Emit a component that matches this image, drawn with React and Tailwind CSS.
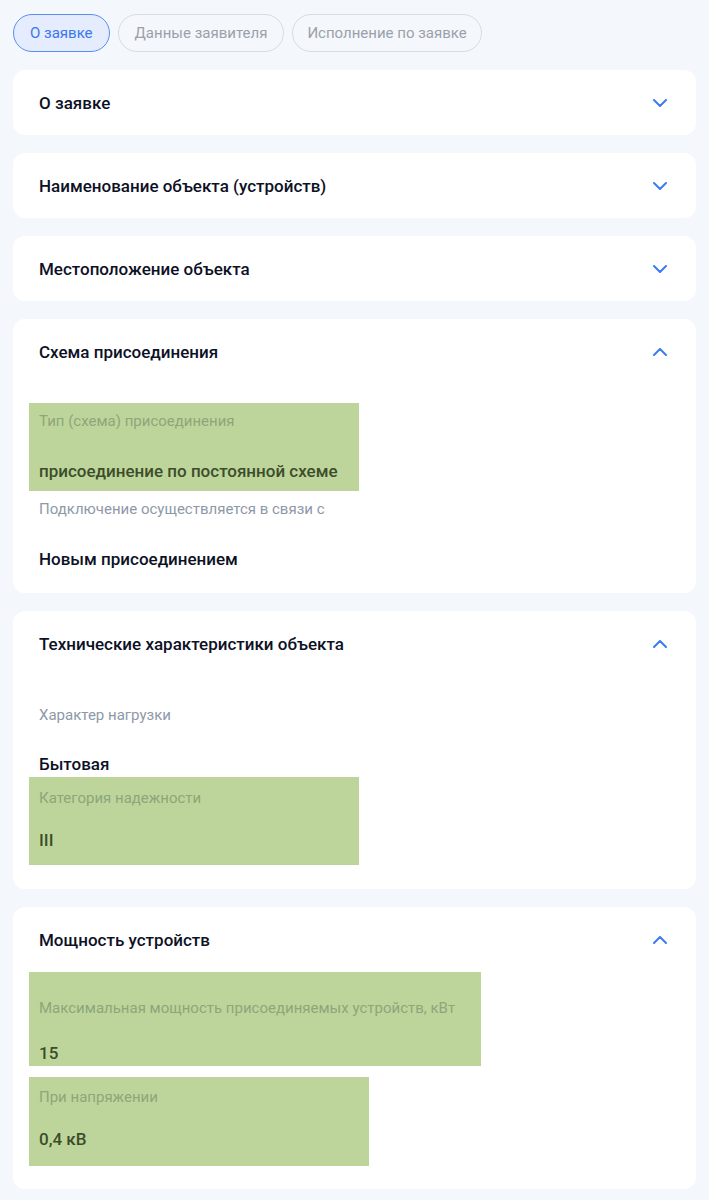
import React from 'react';

const font = { fontFamily: 'Roboto, "Noto Sans", sans-serif' };

function Chevron({ open }) {
  return (
    <svg width="14" height="8" viewBox="0 0 14 8" fill="none" className="shrink-0">
      <path
        d={open ? 'M1 7l6-6 6 6' : 'M1 1l6 6 6-6'}
        stroke="#3b7cf2"
        strokeWidth="2"
        strokeLinecap="round"
        strokeLinejoin="round"
      />
    </svg>
  );
}

function Card({ title, open, bodyClass, children }) {
  return (
    <div className="bg-white rounded-xl">
      <div className="h-[65px] flex items-center justify-between pl-[26px] pr-[29px]">
        <span className="text-[17px] font-medium text-[#0d1126] pt-[3px]">{title}</span>
        <Chevron open={open} />
      </div>
      {open && <div className={bodyClass}>{children}</div>}
    </div>
  );
}

// plain field, no highlight
function Field({ label, value, className, gap }) {
  return (
    <div className={`px-[10px] whitespace-nowrap ${className}`}>
      <div className="text-[15px] leading-5 text-[#8e99a8]">{label}</div>
      <div className={`${gap} text-[17px] leading-6 font-medium text-[#0d1126]`}>{value}</div>
    </div>
  );
}

// highlighted field (green marker)
function Marked({ label, value, className, gap }) {
  return (
    <div className={`px-[10px] whitespace-nowrap bg-[#bdd59a] ${className}`}>
      <div className="text-[15px] leading-5 text-[#8ea67a]">{label}</div>
      <div className={`${gap} text-[17px] leading-6 font-medium text-[#3c4d2b]`}>{value}</div>
    </div>
  );
}

export default function App() {
  return (
    <div className="min-h-screen bg-[#f4f7fc] px-[13px] pt-[14px] pb-4" style={font}>
      {/* Tabs */}
      <div className="flex gap-[8px]">
        <button className="h-[38px] px-[16px] rounded-full border border-[#5b8ef2] bg-[#e4ecfd] text-[15px] text-[#3b77ef]">
          О заявке
        </button>
        <button className="h-[38px] px-[16px] rounded-full border border-[#d9dde3] text-[15px] text-[#9ba1aa]">
          Данные заявителя
        </button>
        <button className="h-[38px] px-[14px] rounded-full border border-[#d9dde3] text-[15px] text-[#9ba1aa]">
          Исполнение по заявке
        </button>
      </div>

      <div className="mt-[18px] flex flex-col gap-[18px]">
        <Card title="О заявке" />
        <Card title="Наименование объекта (устройств)" />
        <Card title="Местоположение объекта" />

        <Card title="Схема присоединения" open bodyClass="pl-4 pt-[19px] pb-[14px]">
          <Marked
            className="w-[330px] pt-2 pb-2"
            gap="mt-[28px]"
            label="Тип (схема) присоединения"
            value="присоединение по постоянной схеме"
          />
          <Field
            className="pt-2 pb-2"
            gap="mt-[28px]"
            label="Подключение осуществляется в связи с"
            value="Новым присоединением"
          />
        </Card>

        <Card title="Технические характеристики объекта" open bodyClass="pl-4 pt-[21px] pb-6">
          <Field
            className="pt-2 pb-[1px]"
            gap="mt-[27px]"
            label="Характер нагрузки"
            value="Бытовая"
          />
          <Marked
            className="w-[330px] pt-[11px] pb-[13px]"
            gap="mt-5"
            label="Категория надежности"
            value="III"
          />
        </Card>

        <Card title="Мощность устройств" open bodyClass="pl-4 pb-[23px] flex flex-col gap-[11px]">
          <Marked
            className="w-[452px] pt-[26px] pb-[1px]"
            gap="mt-[23px]"
            label="Максимальная мощность присоединяемых устройств, кВт"
            value="15"
          />
          <Marked
            className="w-[340px] pt-[10px] pb-[15px]"
            gap="mt-5"
            label="При напряжении"
            value="0,4 кВ"
          />
        </Card>
      </div>
    </div>
  );
}
